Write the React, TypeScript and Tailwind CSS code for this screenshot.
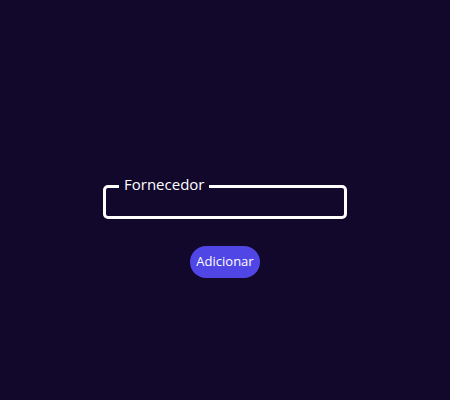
export default function App() {
    return (
        <div className="flex flex-col items-center justify-center h-[400px] w-full bg-[#12082c] pt-[56px]" style={{ fontFamily: '"Open Sans", Lato, sans-serif' }}>
            <fieldset className="w-[244px] h-[41px] border-[3px] border-white rounded-[5px] px-[13px]">
                <legend className="px-[5px] text-[15px] leading-[16px] text-white">
                    <span className="relative -top-[2px]">Fornecedor</span>
                </legend>
                <input className="w-full bg-transparent outline-none text-white text-sm" />
            </fieldset>
            <button className="mt-[27px] h-[32px] px-[6px] rounded-full bg-[#5046e5] text-white text-[13px]">
                Adicionar
            </button>
        </div>
    )
}
